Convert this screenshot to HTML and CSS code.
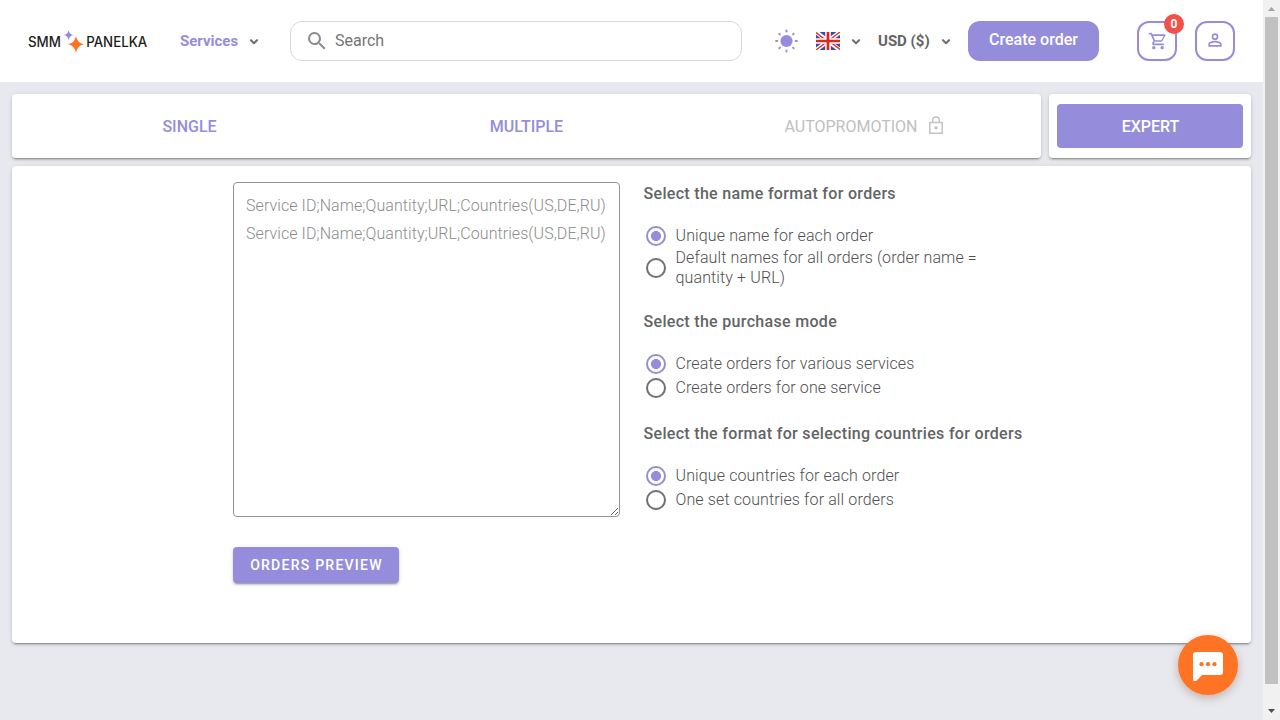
FILE: index.html
```html
<!DOCTYPE html>
<html lang="en">
<head>
<meta charset="utf-8">
<title>SMM Panelka</title>
<link rel="stylesheet" href="styles.css">
</head>
<body>
<div class="app">
  <div class="page">
    <header class="header">
      <svg class="logo" width="124" height="24" viewBox="0 0 124 24">
        <text x="0" y="17.6" textLength="33" lengthAdjust="spacingAndGlyphs">SMM</text>
        <text x="58.2" y="17.6" textLength="61" lengthAdjust="spacingAndGlyphs">PANELKA</text>
        <path fill="#958ddb" d="M40.6 1 Q41.2 5.4 45.6 6 Q41.2 6.6 40.6 11.5 Q40 6.6 35.6 6 Q40 5.4 40.6 1Z"/>
        <path fill="#ff7324" d="M48 7 Q49.3 14 56 15.3 Q49.3 16.6 48 24 Q46.7 16.6 40 15.3 Q46.7 14 48 7Z"/>
      </svg>
      <nav class="services">Services
        <svg class="chevron" width="10" height="6" viewBox="0 0 10 6"><path d="M2 1.2 5 4.2 8 1.2"/></svg>
      </nav>
      <label class="search">
        <svg width="24" height="24" viewBox="0 0 24 24"><path fill="#8b8b8b" d="M9.5,3A6.5,6.5 0 0,1 16,9.5C16,11.11 15.41,12.59 14.44,13.73L14.71,14H15.5L20.5,19L19,20.5L14,15.5V14.71L13.73,14.44C12.59,15.41 11.11,16 9.5,16A6.5,6.5 0 0,1 3,9.5A6.5,6.5 0 0,1 9.5,3M9.5,5C7,5 5,7 5,9.5C5,12 7,14 9.5,14C12,14 14,12 14,9.5C14,7 12,5 9.5,5Z"/></svg>
        <span>Search</span>
      </label>
      <svg class="sun" width="24" height="24" viewBox="-12.5 -12 24 24"><circle r="6.1" fill="#958ddb"/><path stroke="#958ddb" stroke-width="2" stroke-linecap="round" d="M0-10.4V-9.4M0 9.4V10.4M-10.4 0H-9.2M9.2 0H10.4M-7.2-7.2-6.6-6.6M6.6 6.6 7.2 7.2M-7.2 7.2-6.6 6.6M6.6-6.6 7.2-7.2"/></svg>
      <div class="language">
        <svg width="24" height="18" viewBox="0 0 24 18"><path fill="#3f4a9d" d="M0 0H24V18H0Z"/><path stroke="#fff" stroke-width="4.2" d="M0 0 24 18M24 0 0 18"/><path stroke="#e02a20" stroke-width="1.3" d="M0 .6 11 9M24 0 12 9M0 18 12 9M24 17.4 13 9"/><path stroke="#fff" stroke-width="5.6" d="M12 0V18M0 9H24"/><path stroke="#e1251b" stroke-width="2.7" d="M12 0V18M0 9H24"/></svg>
        <svg class="chevron" width="10" height="6" viewBox="0 0 10 6"><path d="M2 1.2 5 4.2 8 1.2"/></svg>
      </div>
      <div class="currency"><span>USD ($)</span>
        <svg class="chevron" width="10" height="6" viewBox="0 0 10 6"><path d="M2 1.2 5 4.2 8 1.2"/></svg>
      </div>
      <button class="create">Create order</button>
      <div class="square cart">
        <svg width="20" height="20" viewBox="0 0 24 24"><path d="M17,18A2,2 0 0,1 19,20A2,2 0 0,1 17,22C15.89,22 15,21.1 15,20C15,18.89 15.89,18 17,18M1,2H4.27L5.21,4H20A1,1 0 0,1 21,5C21,5.17 20.95,5.34 20.88,5.5L17.3,11.97C16.96,12.58 16.3,13 15.55,13H8.1L7.2,14.63L7.17,14.75A0.25,0.25 0 0,0 7.42,15H19V17H7C5.89,17 5,16.1 5,15C5,14.65 5.09,14.32 5.24,14.04L6.6,11.59L3,4H1V2M7,18A2,2 0 0,1 9,20A2,2 0 0,1 7,22C5.89,22 5,21.1 5,20C5,18.89 5.89,18 7,18M16,11L18.78,6H6.14L8.5,11H16Z"/></svg>
        <span class="badge">0</span>
      </div>
      <div class="square account">
        <svg width="20" height="20" viewBox="0 0 24 24"><path d="M12,4A4,4 0 0,1 16,8A4,4 0 0,1 12,12A4,4 0 0,1 8,8A4,4 0 0,1 12,4M12,6A2,2 0 0,0 10,8A2,2 0 0,0 12,10A2,2 0 0,0 14,8A2,2 0 0,0 12,6M12,13C14.67,13 20,14.33 20,17V20H4V17C4,14.33 9.33,13 12,13M12,14.9C9.03,14.9 5.9,16.36 5.9,17V18.1H18.1V17C18.1,16.36 14.97,14.9 12,14.9Z"/></svg>
      </div>
    </header>
    <main class="content">
      <div class="tab-row">
        <div class="card tabs">
          <div class="tab">SINGLE</div>
          <div class="tab">MULTIPLE</div>
          <div class="tab disabled">AUTOPROMOTION
            <svg width="14" height="20" viewBox="0 0 14 20"><path fill="none" stroke="#c4c4c4" stroke-width="1.5" d="M.75 6.5H13.25V17.2H.75ZM3.7 6.5V4.2A3.3 3.3 0 0 1 10.3 4.2V6.5"/><circle cx="7" cy="11.8" r="1.7" fill="#c4c4c4"/></svg>
          </div>
        </div>
        <div class="card expert"><div class="expert-button">EXPERT</div></div>
      </div>
      <section class="card panel">
        <div class="form">
          <textarea class="orders" placeholder="Service ID;Name;Quantity;URL;Countries(US,DE,RU)&#10;Service ID;Name;Quantity;URL;Countries(US,DE,RU)"></textarea>
          <button class="preview">ORDERS PREVIEW</button>
        </div>
        <div class="options">
          <h2>Select the name format for orders</h2>
          <div class="group">
            <label class="option"><i class="radio on"></i><span>Unique name for each order</span></label>
            <label class="option"><i class="radio"></i><span>Default names for all orders (order name =<br>quantity + URL)</span></label>
          </div>
          <h2>Select the purchase mode</h2>
          <div class="group">
            <label class="option"><i class="radio on"></i><span>Create orders for various services</span></label>
            <label class="option"><i class="radio"></i><span>Create orders for one service</span></label>
          </div>
          <h2>Select the format for selecting countries for orders</h2>
          <div class="group">
            <label class="option"><i class="radio on"></i><span>Unique countries for each order</span></label>
            <label class="option"><i class="radio"></i><span>One set countries for all orders</span></label>
          </div>
        </div>
      </section>
    </main>
  </div>
  <div class="scrollbar">
    <svg width="17" height="17" viewBox="0 0 17 17"><path fill="#a3a3a3" d="M5 11 8.5 7 12 11Z"/></svg>
    <div class="thumb"></div>
    <svg class="down" width="17" height="17" viewBox="0 0 17 17"><path fill="#505050" d="M5 6 8.5 10 12 6Z"/></svg>
  </div>
  <div class="chat">
    <svg width="32" height="32" viewBox="0 0 32 32"><path fill="#fff" d="M4 3H28Q31 3 31 6V23Q31 26 28 26H10L4.2 32Q1 34 1 30V6Q1 3 4 3Z"/><g fill="#ff7324"><circle cx="9.5" cy="15.2" r="2.1"/><circle cx="16" cy="15.2" r="2.1"/><circle cx="22.5" cy="15.2" r="2.1"/></g></svg>
  </div>
</div>
</body>
</html>
```
FILE: styles.css
```css
* { box-sizing: border-box; }
body { margin: 0; font-family: Roboto, sans-serif; font-size: 16px; color: #646464; overflow: hidden; }
svg { display: block; flex: none; }
button { border: 0; padding: 0; font-family: inherit; color: #fff; background: #958ddb; }
.app { display: flex; height: 720px; background: #e8e9ee; }
.page { width: 1263px; }

.header { height: 82px; padding: 0 28px; display: flex; align-items: center; background: #fff; }
.logo text { font-family: Inter, sans-serif; font-size: 14px; font-weight: 500; fill: #1c1c1c; }
.services { display: flex; align-items: center; gap: 11px; width: 110px; margin-left: 28px; font-size: 15px; font-weight: 700; color: #958ddb; white-space: nowrap; }
.chevron { margin-top: 1px; }
.chevron path { fill: none; stroke: #707070; stroke-width: 2.1; stroke-linecap: round; stroke-linejoin: round; }
.search { display: flex; align-items: center; gap: 6px; width: 452px; height: 40px; padding-left: 14px; border: 1px solid #d9d9d9; border-radius: 12px; color: #757575; }
.search span { line-height: 20px; }
.sun { margin-left: 32px; }
.language { display: flex; align-items: center; gap: 11px; width: 62px; margin-left: 18px; }
.currency { display: flex; align-items: center; gap: 11px; width: 90px; font-size: 15px; font-weight: 700; white-space: nowrap; }
.create { width: 131px; height: 40px; padding-bottom: 2px; border-radius: 12px; font-size: 16px; font-weight: 500; line-height: 20px; }
.square { position: relative; display: flex; align-items: center; justify-content: center; width: 40px; height: 40px; border: 2px solid #958ddb; border-radius: 12px; }
.square path { fill: #958ddb; }
.cart { margin-left: 38px; padding-left: 1px; }
.account { margin-left: 18px; padding-bottom: 2px; }
.badge { position: absolute; right: -9px; top: -9px; width: 20px; height: 20px; border-radius: 50%; background: #f2504b; color: #fff; font-size: 12px; font-weight: 700; line-height: 20px; text-align: center; }

.content { padding: 12px; display: flex; flex-direction: column; gap: 8px; }
.card { background: #fff; border-radius: 4px; box-shadow: 0 3px 1px -2px rgba(0,0,0,.2), 0 2px 2px 0 rgba(0,0,0,.14), 0 1px 5px 0 rgba(0,0,0,.12); }
.tab-row { display: flex; gap: 8px; height: 64px; }
.tabs { width: 1029px; padding: 0 8px 0 9px; display: flex; align-items: center; }
.tab { flex: 1; display: flex; align-items: center; justify-content: center; gap: 11px; color: #958ddb; font-weight: 500; }
.disabled { padding-right: 1px; color: #c0c0c0; font-weight: 400; }
.expert { flex: 1; display: flex; padding: 10px 8px; }
.expert-button { flex: 1; display: flex; align-items: center; justify-content: center; padding-left: 1px; background: #958ddb; border-radius: 4px; color: #fff; font-weight: 500; }

.panel { height: 477px; padding: 16px 0 0 221px; display: flex; gap: 23.5px; }
.form { width: 387px; display: flex; flex-direction: column; align-items: flex-start; }
.orders { display: block; width: 387px; height: 335px; padding: 9px 12px; border: 1px solid #959595; border-radius: 4px; background: #fff; font: 300 16px/28px Roboto, sans-serif; letter-spacing: .07px; resize: both; white-space: pre; overflow: hidden; }
.orders::placeholder { color: #8c8c8c; }
.preview { width: 166px; height: 36px; margin-top: 30px; padding-left: 1px; border-radius: 4px; font-size: 14px; font-weight: 500; letter-spacing: 1.25px; box-shadow: 0 3px 1px -2px rgba(0,0,0,.2), 0 2px 2px 0 rgba(0,0,0,.14), 0 1px 5px 0 rgba(0,0,0,.12); }
.options h2 { margin: 0 0 18px; font-size: 16px; font-weight: 500; line-height: 24px; letter-spacing: .315px; }
.group { margin-bottom: 22px; }
.option { display: flex; align-items: center; gap: 10px; min-height: 24px; padding-left: 2px; font-weight: 300; line-height: 20px; letter-spacing: .12px; color: #505050; }
.radio { flex: none; width: 20px; height: 20px; border: 2px solid #707070; border-radius: 50%; }
.on { border-color: #958ddb; background: radial-gradient(circle, #958ddb 4.7px, transparent 5.3px); }

.scrollbar { width: 17px; display: flex; flex-direction: column; align-items: center; background: #f1f1f1; }
.thumb { width: 13px; height: 667px; background: #c1c1c1; }
.down { margin-top: auto; }
.chat { position: absolute; left: 1178px; top: 635px; width: 60px; height: 60px; display: flex; align-items: center; justify-content: center; border-radius: 50%; background: #ff7324; box-shadow: 0 3px 10px rgba(120,40,0,.3); }
```
